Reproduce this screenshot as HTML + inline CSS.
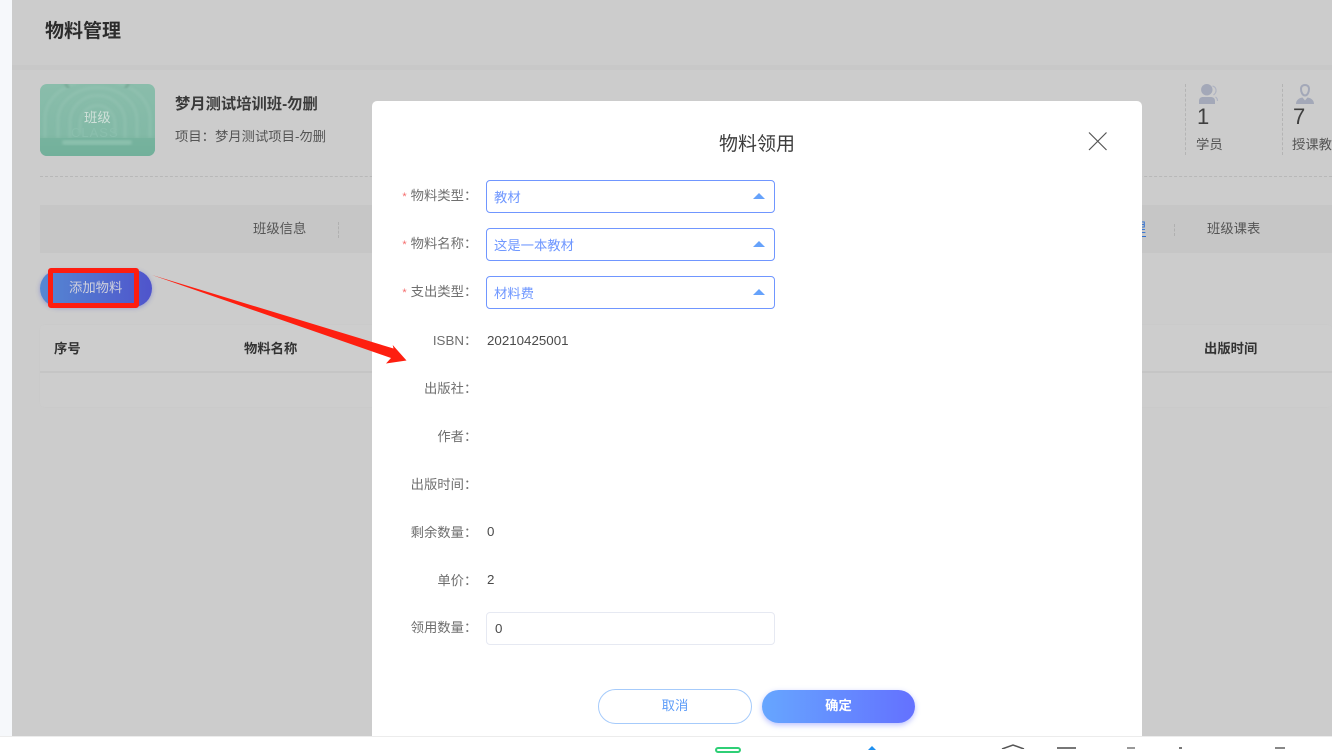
<!DOCTYPE html>
<html lang="zh">
<head>
<meta charset="utf-8">
<title>物料管理</title>
<style>
html,body{margin:0;padding:0;}
body{width:1332px;height:749px;overflow:hidden;background:#fff;position:relative;font-family:"Liberation Sans","Noto Sans CJK SC",sans-serif;font-size:13.33px;color:#444;}
.a{position:absolute;white-space:nowrap;line-height:16px;}
.box{position:absolute;}
.lab{position:absolute;left:372px;width:105.3px;text-align:right;color:#6f6f6f;font-size:13.33px;line-height:16px;white-space:nowrap;}
.lab i{font-style:normal;color:#f56c6c;margin-right:4px;font-size:11px;}
.val{position:absolute;left:487px;color:#4a4a4a;font-size:13.33px;line-height:16px;}
.sel{position:absolute;left:486px;width:287px;height:31px;border:1px solid #7096ff;border-radius:4px;background:#fff;}
.sel span{position:absolute;left:7px;top:9px;font-size:13.33px;line-height:16px;color:#6f97ff;white-space:nowrap;}
.sel b{position:absolute;left:266px;top:12px;width:0;height:0;border-left:6px solid transparent;border-right:6px solid transparent;border-bottom:6px solid #66a2fb;}
</style>
</head>
<body>
<!-- page backdrop -->
<div class="box" style="left:0;top:0;width:12px;height:736px;background:#f6f8fb"></div>
<div class="box" style="left:12px;top:0;width:1320px;height:736px;background:#cccccc"></div>
<div class="box" style="left:12px;top:65px;width:1320px;height:5px;background:#c8c8c8"></div>
<div class="a" style="left:45px;top:20px;font-size:19px;line-height:24px;font-weight:bold;color:#2c2c2c">物料管理</div>

<!-- class thumbnail -->
<svg class="box" style="left:40px;top:84px" width="115" height="72" viewBox="0 0 115 72">
<defs>
<linearGradient id="g" x1="0" y1="0" x2="0" y2="1"><stop offset="0" stop-color="#8abdab"/><stop offset=".7" stop-color="#82b9a6"/><stop offset="1" stop-color="#6dab95"/></linearGradient>
<filter id="b"><feGaussianBlur stdDeviation="1.200"/></filter>
<clipPath id="c"><rect width="115" height="72" rx="7"/></clipPath>
</defs>
<g clip-path="url(#c)">
<rect width="115" height="72" fill="url(#g)"/>
<g fill="none" stroke="#9cc9b9" stroke-width="3" opacity=".38" filter="url(#b)">
<path d="M5 54V34a52 38 0 0 1 105 0V54"/>
<path d="M18 54V36a39 32 0 0 1 79 0V54"/>
<path d="M30 54V38a27 26 0 0 1 55 0V54"/>
<path d="M40 50V40a17 18 0 0 1 35 0V50"/>
</g>
<rect x="0" y="54" width="115" height="18" fill="#74b29c" opacity=".75"/>
<rect x="22" y="56" width="70" height="5" rx="2.5" fill="#94c6b4" opacity=".7" filter="url(#b)"/>
<path d="M25 0l4 4M89 0l-4 4" stroke="#6f9f8d" stroke-width="2" filter="url(#b)"/>
</g>
</svg>
<div class="a" style="left:84px;top:110px;line-height:16px;color:#cfe0d9">班级</div>
<div class="a" style="left:71px;top:126px;font-size:13px;line-height:14px;letter-spacing:1px;color:#8abfad">CLASS</div>

<div class="a" style="left:175px;top:96px;font-size:15.3px;line-height:18px;font-weight:bold;color:#3a3a3a">梦月测试培训班-勿删</div>
<div class="a" style="left:175px;top:129px;color:#555">项目：梦月测试项目-勿删</div>

<!-- stats -->
<div class="box" style="left:1185px;top:84px;height:71px;border-left:1px dashed #b4b4b4"></div>
<div class="box" style="left:1282px;top:84px;height:71px;border-left:1px dashed #b4b4b4"></div>
<svg class="box" style="left:1198px;top:84px" width="22" height="21" viewBox="0 0 22 21">
<circle cx="8.800" cy="5.700" r="5.700" fill="#a3a8b8"/><path d="M1 20v-3c0-3 2-4 4-4h7.500c2.500 0 4.500 1 4.500 4v3z" fill="#a3a8b8"/>
<path d="M14.500 2c4 1 5 6 1 9M17.500 13c1.500 1 2 2 2 4" fill="none" stroke="#b0b4c2" stroke-width="1.200"/>
</svg>
<svg class="box" style="left:1295px;top:84px" width="21" height="21" viewBox="0 0 21 21">
<path d="M6 5c0-3 2-4 4-4s4 1 4 4-1.500 6.500-4 6.500-4-3.500-4-6.500z" fill="none" stroke="#a3a8b8" stroke-width="2"/>
<path d="M1 20c0-4 3-6 6.500-6.500l2.500 3 2.500-3c3.500.5 6.500 2.500 6.500 6.500z" fill="#a3a8b8"/>
</svg>
<div class="a" style="left:1197px;top:105px;font-size:22px;line-height:24px;color:#3f3f3f">1</div>
<div class="a" style="left:1293px;top:105px;font-size:22px;line-height:24px;color:#3f3f3f">7</div>
<div class="a" style="left:1196px;top:137px;color:#555">学员</div>
<div class="a" style="left:1292px;top:137px;color:#555">授课教</div>

<div class="box" style="left:40px;top:176px;width:1292px;border-top:1px dashed #b8b8b8"></div>

<!-- tabs -->
<div class="box" style="left:40px;top:205px;width:1292px;height:48px;background:#c6c6c6"></div>
<div class="a" style="left:253px;top:221px;color:#555">班级信息</div>
<div class="box" style="left:338px;top:222px;height:16px;border-left:1px dashed #b0b0b0"></div>
<div class="a" style="left:1092.500px;top:220px;color:#2f6fd0;border-bottom:1px solid #2f6fd0">物料管理</div>
<div class="box" style="left:1174px;top:224px;height:12px;border-left:1px dashed #b0b0b0"></div>
<div class="a" style="left:1207px;top:221px;color:#555">班级课表</div>

<!-- add button -->
<div class="box" style="left:40px;top:270px;width:112px;height:37px;border-radius:19px;background:linear-gradient(90deg,#5588d2,#4f54cc);box-shadow:0 1px 5px rgba(80,90,205,.45)"></div>

<!-- table -->
<div class="box" style="left:40px;top:325px;width:1292px;height:82px;background:#cdcdcd;border-radius:4px;box-shadow:0 0 2px rgba(0,0,0,.02)"></div>
<div class="box" style="left:40px;top:371px;width:1292px;height:2px;background:#c5c5c5"></div>
<div class="a" style="left:54px;top:341px;font-weight:bold;color:#333">序号</div>
<div class="a" style="left:244px;top:341px;font-weight:bold;color:#333">物料名称</div>
<div class="a" style="left:1204px;top:341px;font-weight:bold;color:#333">出版时间</div>

<!-- dialog -->
<div class="box" style="left:372px;top:101px;width:770px;height:635px;background:#fff;border-radius:5px 5px 0 0"></div>
<div class="a" style="left:372px;width:770px;top:133px;text-align:center;font-size:19px;line-height:24px;color:#3d3d3d">物料领用</div>
<svg class="box" style="left:1088px;top:131px" width="20" height="20" viewBox="0 0 20 20"><path d="M1 1.500L18.500 19M18.500 1.500L1 19" stroke="#555" stroke-width="1.200" fill="none"/></svg>

<div class="lab" style="top:188px"><i>*</i>物料类型：</div>
<div class="sel" style="top:180px"><span>教材</span><b></b></div>
<div class="lab" style="top:236px"><i>*</i>物料名称：</div>
<div class="sel" style="top:228px"><span>这是一本教材</span><b></b></div>
<div class="lab" style="top:284px"><i>*</i>支出类型：</div>
<div class="sel" style="top:276px"><span>材料费</span><b></b></div>

<div class="lab" style="top:333px">ISBN：</div><div class="val" style="top:333px">20210425001</div>
<div class="lab" style="top:381px">出版社：</div>
<div class="lab" style="top:429px">作者：</div>
<div class="lab" style="top:477px">出版时间：</div>
<div class="lab" style="top:525px">剩余数量：</div><div class="val" style="top:524px">0</div>
<div class="lab" style="top:573px">单价：</div><div class="val" style="top:572px">2</div>
<div class="lab" style="top:620px">领用数量：</div>
<div class="box" style="left:486px;top:612px;width:287px;height:31px;border:1px solid #e6e9f2;border-radius:4px"></div>
<div class="val" style="left:495px;top:621px">0</div>

<div class="box" style="left:598px;top:689px;width:152px;height:33px;border:1px solid #a6cbfb;border-radius:18px;background:#fff"></div>
<div class="a" style="left:598px;width:154px;top:698px;text-align:center;color:#5d9cf8">取消</div>
<div class="box" style="left:762px;top:690px;width:153px;height:33px;border-radius:17px;background:linear-gradient(90deg,#66a6ff,#6471ff);box-shadow:0 2px 6px rgba(100,115,255,.45)"></div>
<div class="a" style="left:762px;width:153px;top:698px;text-align:center;font-weight:bold;color:#fff">确定</div>

<!-- annotations -->
<div class="box" style="left:48px;top:268px;width:81px;height:30px;border:5px solid #fe1d10;border-radius:3px"></div>
<div class="a" style="left:69px;top:280px;line-height:16px;color:#cfd0dc">添加物料</div>
<svg class="box" style="left:0;top:0" width="1332" height="749" viewBox="0 0 1332 749">
<path d="M152 275L393.500 348.500L392.700 345L406.500 360.500L386 363.500L391 358Z" fill="#fe1f10"/>
</svg>

<!-- bottom strip -->
<div class="box" style="left:0;top:736px;width:1332px;height:1px;background:#ececec"></div>
<div class="box" style="left:715px;top:747px;width:26px;height:6px;border:2px solid #2fcf76;border-radius:3px;box-sizing:border-box"></div>
<div class="box" style="left:868px;top:746px;width:0;height:0;border-left:4px solid transparent;border-right:4px solid transparent;border-bottom:4px solid #1e90f0"></div>
<svg class="box" style="left:1000px;top:744px" width="26" height="5" viewBox="0 0 26 5"><path d="M2 5L13 1L24 5" fill="none" stroke="#555" stroke-width="1.500"/></svg>
<div class="box" style="left:1057px;top:747px;width:19px;height:2px;background:#777"></div>
<div class="box" style="left:1127px;top:747px;width:8px;height:2px;background:#999"></div>
<div class="box" style="left:1179px;top:747px;width:3px;height:2px;background:#777"></div>
<div class="box" style="left:1275px;top:747px;width:10px;height:2px;background:#888"></div>
</body>
</html>
